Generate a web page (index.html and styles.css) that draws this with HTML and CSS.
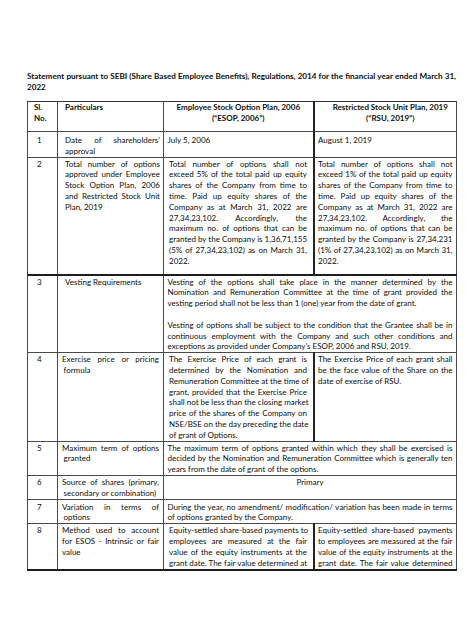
FILE: index.html
```html
<!DOCTYPE html>
<html lang="en">
<head>
<meta charset="utf-8">
<title>ESOP Statement</title>
<link rel="stylesheet" href="styles.css">
</head>
<body>
<div class="page">
  <div class="title">
    <span class="l">Statement pursuant to SEBI (Share Based Employee Benefits), Regulations, 2014 for the financial year ended March 31,</span>
    <span class="l e">2022</span>
  </div>
  <table class="grid">
    <colgroup>
      <col class="c-sl"><col class="c-part"><col class="c-esop"><col class="c-rsu">
    </colgroup>
    <tr class="r-head">
      <th class="sl-h"><span class="l e">Sl.</span><span class="l e">No.</span></th>
      <th class="part-h"><span class="l e">Particulars</span></th>
      <th class="esop-h thick-r"><span class="l c">Employee Stock Option Plan, 2006</span><span class="l c">(“ESOP, 2006”)</span></th>
      <th class="rsu-h"><span class="l c">Restricted Stock Unit Plan, 2019</span><span class="l c">(“RSU, 2019”)</span></th>
    </tr>
    <tr class="r1">
      <td class="sl">1</td>
      <td class="part"><span class="l">Date of shareholders’</span><span class="l e">approval</span></td>
      <td class="esop thick-r tight"><span class="l e">July 5, 2006</span></td>
      <td class="rsu"><span class="l e">August 1, 2019</span></td>
    </tr>
    <tr class="r2">
      <td class="sl">2</td>
      <td class="part">
        <span class="l">Total number of options</span>
        <span class="l">approved under Employee</span>
        <span class="l">Stock Option Plan, 2006</span>
        <span class="l">and Restricted Stock Unit</span>
        <span class="l e">Plan, 2019</span>
      </td>
      <td class="esop thick-r">
        <span class="l">Total number of options shall not</span>
        <span class="l">exceed 5% of the total paid up equity</span>
        <span class="l">shares of the Company from time to</span>
        <span class="l">time. Paid up equity shares of the</span>
        <span class="l">Company as at March 31, 2022 are</span>
        <span class="l">27,34,23,102. Accordingly, the</span>
        <span class="l">maximum no. of options that can be</span>
        <span class="l">granted by the Company is 1,36,71,155</span>
        <span class="l">(5% of 27,34,23,102) as on March 31,</span>
        <span class="l e">2022.</span>
      </td>
      <td class="rsu">
        <span class="l">Total number of options shall not</span>
        <span class="l">exceed 1% of the total paid up equity</span>
        <span class="l">shares of the Company from time to</span>
        <span class="l">time. Paid up equity shares of the</span>
        <span class="l">Company as at March 31, 2022 are</span>
        <span class="l">27,34,23,102. Accordingly, the</span>
        <span class="l">maximum no. of options that can be</span>
        <span class="l">granted by the Company is 27,34,231</span>
        <span class="l">(1% of 27,34,23,102) as on March 31,</span>
        <span class="l e">2022.</span>
      </td>
    </tr>
    <tr class="r3">
      <td class="sl">3</td>
      <td class="part"><span class="l e">Vesting Requirements</span></td>
      <td class="merged" colspan="2">
        <span class="l">Vesting of the options shall take place in the manner determined by the</span>
        <span class="l">Nomination and Remuneration Committee at the time of grant provided the</span>
        <span class="l e">vesting period shall not be less than 1 (one) year from the date of grant.</span>
        <span class="l e blank">&nbsp;</span>
        <span class="l">Vesting of options shall be subject to the condition that the Grantee shall be in</span>
        <span class="l">continuous employment with the Company and such other conditions and</span>
        <span class="l e">exceptions as provided under Company’s ESOP, 2006 and RSU, 2019.</span>
      </td>
    </tr>
    <tr class="r4">
      <td class="sl">4</td>
      <td class="part2"><span class="l">Exercise price or pricing</span><span class="l e ind">formula</span></td>
      <td class="esop thick-r">
        <span class="l">The Exercise Price of each grant is</span>
        <span class="l">determined by the Nomination and</span>
        <span class="l">Remuneration Committee at the time of</span>
        <span class="l">grant, provided that the Exercise Price</span>
        <span class="l">shall not be less than the closing market</span>
        <span class="l">price of the shares of the Company on</span>
        <span class="l">NSE/BSE on the day preceding the date</span>
        <span class="l e">of grant of Options.</span>
      </td>
      <td class="rsu">
        <span class="l">The Exercise Price of each grant shall</span>
        <span class="l">be the face value of the Share on the</span>
        <span class="l e">date of exercise of RSU.</span>
      </td>
    </tr>
    <tr class="r5">
      <td class="sl">5</td>
      <td class="part2"><span class="l">Maximum term of options</span><span class="l e ind">granted</span></td>
      <td class="merged" colspan="2">
        <span class="l">The maximum term of options granted within which they shall be exercised is</span>
        <span class="l">decided by the Nomination and Remuneration Committee which is generally ten</span>
        <span class="l e">years from the date of grant of the options.</span>
      </td>
    </tr>
    <tr class="r6">
      <td class="sl">6</td>
      <td class="part2"><span class="l">Source of shares (primary,</span><span class="l e ind">secondary or combination)</span></td>
      <td class="merged" colspan="2"><span class="l c">Primary</span></td>
    </tr>
    <tr class="r7">
      <td class="sl">7</td>
      <td class="part2"><span class="l">Variation in terms of</span><span class="l e ind">options</span></td>
      <td class="merged" colspan="2">
        <span class="l">During the year, no amendment/ modification/ variation has been made in terms</span>
        <span class="l e">of options granted by the Company.</span>
      </td>
    </tr>
    <tr class="r8">
      <td class="sl">8</td>
      <td class="part2">
        <span class="l">Method used to account</span>
        <span class="l">for ESOS - Intrinsic or fair</span>
        <span class="l e">value</span>
      </td>
      <td class="esop thick-r">
        <span class="l">Equity-settled share-based payments to</span>
        <span class="l">employees are measured at the fair</span>
        <span class="l">value of the equity instruments at the</span>
        <span class="l">grant date. The fair value determined at</span>
      </td>
      <td class="rsu">
        <span class="l">Equity-settled share-based payments</span>
        <span class="l">to employees are measured at the fair</span>
        <span class="l">value of the equity instruments at the</span>
        <span class="l">grant date. The fair value determined</span>
      </td>
    </tr>
  </table>
</div>
</body>
</html>
```

FILE: styles.css
```css
html, body {
  margin: 0;
  padding: 0;
  background: #ffffff;
}

body {
  font-family: Lato, "Liberation Sans", sans-serif;
  font-size: 8px;
  line-height: 10.8px;
  color: #0e0e0e;
}

.page {
  width: 474px;
  height: 632px;
  padding: 71px 0 0 27px;
  box-sizing: border-box;
}

.l {
  display: block;
  text-align: justify;
  text-align-last: justify;
  white-space: nowrap;
}

.l.e {
  text-align-last: left;
}

.l.c {
  text-align: center;
  text-align-last: center;
}

.title {
  width: 429px;
  font-weight: 700;
  font-size: 8.1px;
  line-height: 11px;
  margin-bottom: 8px;
}

.grid {
  border-collapse: collapse;
  table-layout: fixed;
  width: 429px;
}

.c-sl { width: 30px; }
.c-part { width: 106px; }
.c-esop { width: 150px; }
.c-rsu { width: 143px; }

.grid th,
.grid td {
  border: 1px solid #4a4a4a;
  vertical-align: top;
  padding: 1px 3.5px 0 3.5px;
  font-weight: 400;
  text-align: left;
}

.grid th {
  font-weight: 700;
  padding-top: 0;
}

.grid .thick-r {
  border-right: 2px solid #222;
}

.r-head { height: 30px; }
.r1 { height: 25px; }
.r2 { height: 117.5px; }
.r3 { height: 75px; }
.r4 { height: 88px; }
.r5 { height: 34px; }
.r6 { height: 22px; }
.r7 { height: 24px; }
.r8 { height: 46px; }

.r-head th { border-top: 1.5px solid #333; }
.r1 td { padding-top: 3px; }
.r3 td { border-top: 2px solid #1e1e1e; }
.r4 td { border-top: 1.5px solid #333; }
.r7 td { padding-top: 2px; border-top: 1.5px solid #333; }
.r8 td { border-top: 1.5px solid #333; border-bottom: 2px solid #1e1e1e; }

.grid .sl-h { padding-left: 6px; padding-right: 0; }
.grid .sl { padding-left: 9px; padding-right: 0; }
.grid .part-h,
.grid .part { padding-left: 7px; padding-right: 3px; }
.grid .part2 { padding-left: 4px; padding-right: 4px; }
.grid .esop { padding-left: 5px; padding-right: 5.5px; }
.grid .esop.tight { padding-left: 3.5px; }
.grid .esop-h { padding-left: 4px; padding-right: 4px; }
.grid .rsu-h { padding-left: 12px; padding-right: 2px; }
.grid .rsu { padding-left: 3.5px; padding-right: 3.5px; }
.grid .merged { padding-left: 3.5px; padding-right: 3.5px; }

.ind { padding-left: 1.5px; }
```
